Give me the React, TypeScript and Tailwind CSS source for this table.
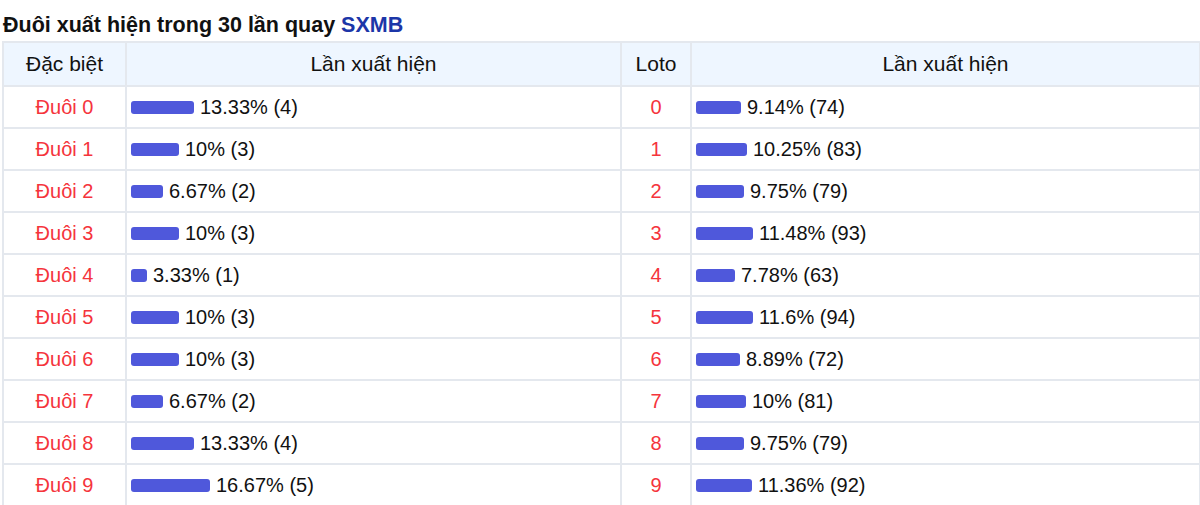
const dacBiet = [
	{ label: "Đuôi 0", pct: 13.33, n: 4 },
	{ label: "Đuôi 1", pct: 10, n: 3 },
	{ label: "Đuôi 2", pct: 6.67, n: 2 },
	{ label: "Đuôi 3", pct: 10, n: 3 },
	{ label: "Đuôi 4", pct: 3.33, n: 1 },
	{ label: "Đuôi 5", pct: 10, n: 3 },
	{ label: "Đuôi 6", pct: 10, n: 3 },
	{ label: "Đuôi 7", pct: 6.67, n: 2 },
	{ label: "Đuôi 8", pct: 13.33, n: 4 },
	{ label: "Đuôi 9", pct: 16.67, n: 5 },
]

const loto = [
	{ label: "0", pct: 9.14, n: 74 },
	{ label: "1", pct: 10.25, n: 83 },
	{ label: "2", pct: 9.75, n: 79 },
	{ label: "3", pct: 11.48, n: 93 },
	{ label: "4", pct: 7.78, n: 63 },
	{ label: "5", pct: 11.6, n: 94 },
	{ label: "6", pct: 8.89, n: 72 },
	{ label: "7", pct: 10, n: 81 },
	{ label: "8", pct: 9.75, n: 79 },
	{ label: "9", pct: 11.36, n: 92 },
]

function Bar({ pct, n, scale }: { pct: number; n: number; scale: number }) {
	return (
		<div className="flex items-center gap-[6px] pl-[4px]">
			<div
				className="h-[13px] rounded-[3px] bg-[#4f58db]"
				style={{ width: Math.round(pct * scale) }}
			></div>
			<span>
				{pct}% ({n})
			</span>
		</div>
	)
}

export default function App() {
	return (
		<main
			className="w-[1200px] h-[505px] overflow-hidden bg-white px-[2px] text-[#111]"
			style={{ fontFamily: '"Liberation Sans", Arial, sans-serif' }}
		>
			<h2 className="pt-[13px] pl-[1px] h-[41px] text-[21.5px] font-bold leading-[25px]">
				Đuôi xuất hiện trong 30 lần quay{" "}
				<span className="text-[#1c36a8]">SXMB</span>
			</h2>

			<table className="w-[1197px] border-collapse table-fixed text-[20px]">
				<colgroup>
					<col className="w-[123px]" />
					<col className="w-[495px]" />
					<col className="w-[70px]" />
					<col className="w-[509px]" />
				</colgroup>
				<thead>
					<tr className="h-[44px] bg-[#eef6ff] text-[21px]">
						<th className="border-2 border-[#e4e8ee] font-normal">Đặc biệt</th>
						<th className="border-2 border-[#e4e8ee] font-normal">Lần xuất hiện</th>
						<th className="border-2 border-[#e4e8ee] font-normal">Loto</th>
						<th className="border-2 border-[#e4e8ee] font-normal">Lần xuất hiện</th>
					</tr>
				</thead>
				<tbody>
					{dacBiet.map((d, i) => (
						<tr key={d.label} className="h-[42px]">
							<td className="border-2 border-[#e4e8ee] text-center text-[#f5343c]">
								{d.label}
							</td>
							<td className="border-2 border-[#e4e8ee]">
								<Bar pct={d.pct} n={d.n} scale={4.75} />
							</td>
							<td className="border-2 border-[#e4e8ee] text-center text-[#f5343c]">
								{loto[i].label}
							</td>
							<td className="border-2 border-[#e4e8ee]">
								<Bar pct={loto[i].pct} n={loto[i].n} scale={4.95} />
							</td>
						</tr>
					))}
				</tbody>
			</table>
		</main>
	)
}
